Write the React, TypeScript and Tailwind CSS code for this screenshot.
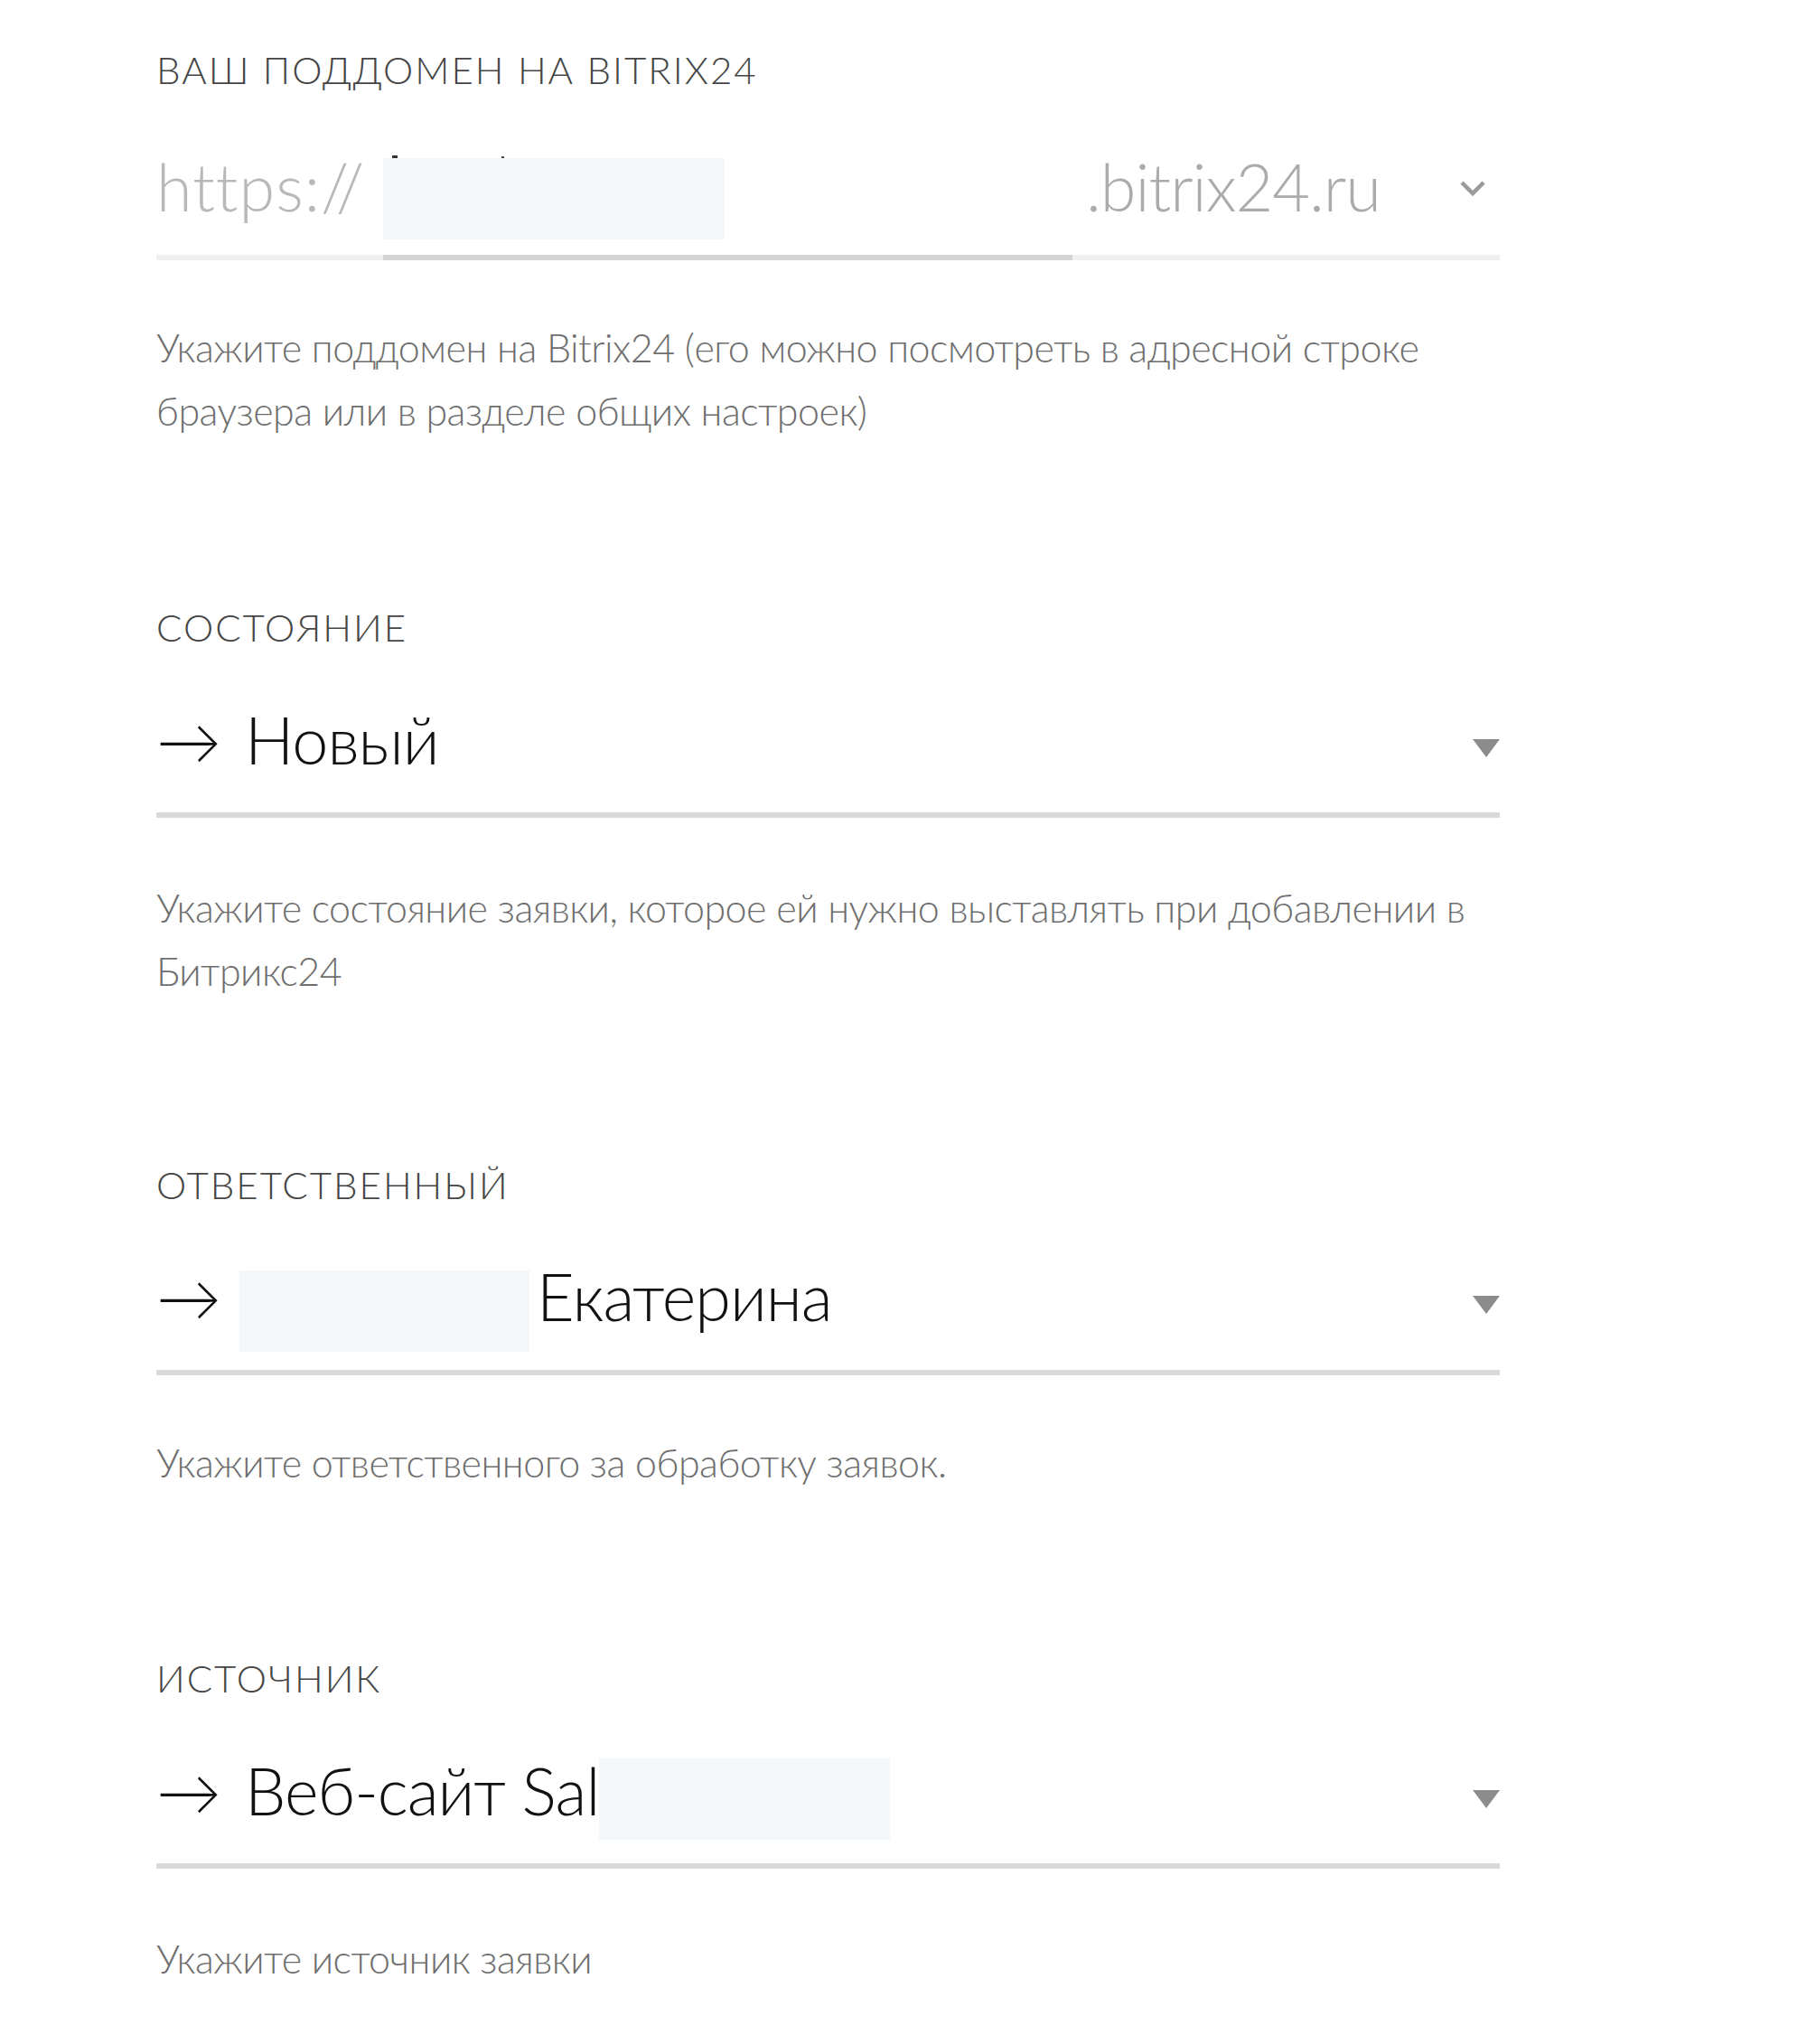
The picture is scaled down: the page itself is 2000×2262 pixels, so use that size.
import React from "react";

function Label({ children }: { children: React.ReactNode }) {
  return (
    <div className="text-[42px] leading-[50px] font-light tracking-[2px] text-[#454545] uppercase whitespace-nowrap">
      {children}
    </div>
  );
}

function Help({ lines }: { lines: string[] }) {
  return (
    <div className="text-[43px] leading-[70px] font-light tracking-[-0.5px] text-[#6e6e6e]">
      {lines.map((l, i) => (
        <div key={i} className="whitespace-nowrap">
          {l}
        </div>
      ))}
    </div>
  );
}

function Caret() {
  return (
    <svg className="mt-[45px] shrink-0" width="30" height="20" viewBox="0 0 30 20">
      <polygon points="0,0 30,0 15,20" fill="#8c8c8c" />
    </svg>
  );
}

function Arrow({ w }: { w: string }) {
  return <span className={`${w} shrink-0 text-[#111]`}>→</span>;
}

export default function App() {
  return (
    <div className="w-[2000px] min-h-[2262px] bg-white font-[Lato,sans-serif]">
      <div className="pl-[173px] w-[1660px] pt-[52px]">
        {/* Section 1 */}
        <section>
          <Label>Ваш поддомен на Bitrix24</Label>
          <div className="mt-[59px] flex items-start h-[90px] text-[72px] leading-[90px] font-light tracking-[-1px]">
            <span className="w-[251px] shrink-0 text-[#b8b8b8] tracking-[1px]">https://</span>
            <div className="relative w-[763px] h-[90px] shrink-0">
              <div className="absolute left-[10px] top-[11px] w-[6px] h-[4px] bg-[#333]" />
              <div className="absolute left-[131px] top-[12px] w-[3px] h-[3px] bg-[#444]" />
              <div className="absolute left-0 top-[14px] w-[378px] h-[90px] bg-[#f4f7fa]" />
            </div>
            <span className="pl-[15px] text-[#ababab]">.bitrix24.ru</span>
            <div className="flex-1" />
            <svg className="mt-[37px] mr-[15px] shrink-0" width="30" height="20" viewBox="0 0 30 20">
              <polyline points="3,4 15,16 27,4" fill="none" stroke="#9a9a9a" strokeWidth="4.5" />
            </svg>
          </div>
          <div className="mt-[31px] flex h-[6px]">
            <div className="w-[251px] bg-[#f0f0f0]" />
            <div className="w-[763px] bg-[#d4d4d4]" />
            <div className="flex-1 bg-[#f0f0f0]" />
          </div>
          <div className="mt-[62px]">
            <Help
              lines={[
                "Укажите поддомен на Bitrix24 (его можно посмотреть в адресной строке",
                "браузера или в разделе общих настроек)",
              ]}
            />
          </div>
        </section>

        {/* Section 2 */}
        <section className="mt-[179px]">
          <Label>Состояние</Label>
          <div className="mt-[54px] flex items-start h-[90px] text-[72px] leading-[90px] font-light tracking-[-1px] text-[#111]">
            <Arrow w="w-[98px]" />
            <span>Новый</span>
            <div className="flex-1" />
            <Caret />
          </div>
          <div className="mt-[36px] h-[6px] bg-[#d9d9d9]" />
          <div className="mt-[65px]">
            <Help
              lines={[
                "Укажите состояние заявки, которое ей нужно выставлять при добавлении в",
                "Битрикс24",
              ]}
            />
          </div>
        </section>

        {/* Section 3 */}
        <section className="mt-[176px]">
          <Label>Ответственный</Label>
          <div className="mt-[53px] flex items-start h-[90px] text-[72px] leading-[90px] font-light tracking-[-1px] text-[#111]">
            <Arrow w="w-[92px]" />
            <div className="mt-[17px] w-[321px] h-[90px] bg-[#f4f7fa] shrink-0" />
            <span className="ml-[8px]">Екатерина</span>
            <div className="flex-1" />
            <Caret />
          </div>
          <div className="mt-[37px] h-[6px] bg-[#d9d9d9]" />
          <div className="mt-[62px]">
            <Help lines={["Укажите ответственного за обработку заявок."]} />
          </div>
        </section>

        {/* Section 4 */}
        <section className="mt-[178px]">
          <Label>Источник</Label>
          <div className="mt-[54px] flex items-start h-[90px] text-[72px] leading-[90px] font-light tracking-[-1px] text-[#111]">
            <Arrow w="w-[98px]" />
            <span>Веб-сайт Sal</span>
            <div className="mt-[10px] w-[322px] h-[90px] bg-[#f4f7fa] shrink-0" />
            <div className="flex-1" />
            <Caret />
          </div>
          <div className="mt-[36px] h-[6px] bg-[#d9d9d9]" />
          <div className="mt-[65px]">
            <Help lines={["Укажите источник заявки"]} />
          </div>
        </section>
      </div>
    </div>
  );
}
